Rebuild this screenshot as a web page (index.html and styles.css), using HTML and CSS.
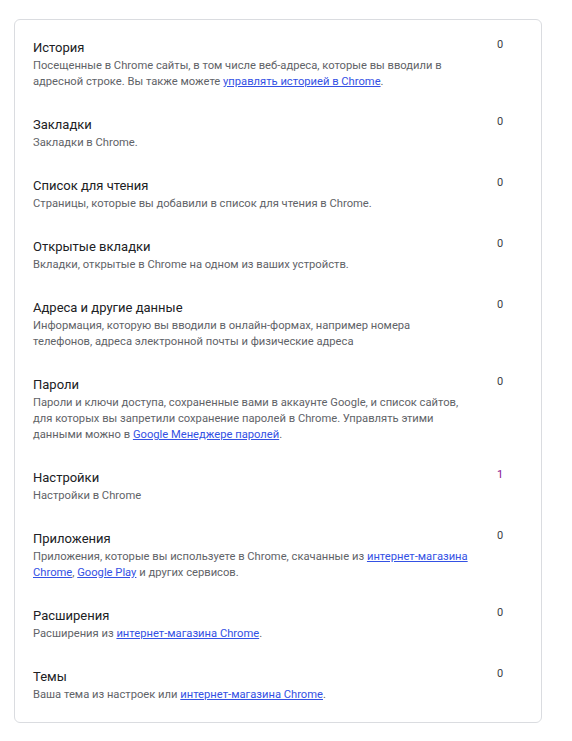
FILE: index.html
```html
<!DOCTYPE html>
<html lang="ru">
<head>
<meta charset="utf-8">
<link rel="stylesheet" href="styles.css">
</head>
<body>
<div class="card">
  <div class="row">
    <div class="info">
      <div class="title">История</div>
      <div class="desc">Посещенные в Chrome сайты, в том числе веб-адреса, которые вы вводили в адресной строке. Вы также можете <a href="#">управлять историей в Chrome</a>.</div>
    </div>
    <div class="count">0</div>
  </div>
  <div class="row">
    <div class="info">
      <div class="title">Закладки</div>
      <div class="desc">Закладки в Chrome.</div>
    </div>
    <div class="count">0</div>
  </div>
  <div class="row">
    <div class="info">
      <div class="title">Список для чтения</div>
      <div class="desc">Страницы, которые вы добавили в список для чтения в Chrome.</div>
    </div>
    <div class="count">0</div>
  </div>
  <div class="row">
    <div class="info">
      <div class="title">Открытые вкладки</div>
      <div class="desc">Вкладки, открытые в Chrome на одном из ваших устройств.</div>
    </div>
    <div class="count">0</div>
  </div>
  <div class="row">
    <div class="info">
      <div class="title">Адреса и другие данные</div>
      <div class="desc">Информация, которую вы вводили в онлайн-формах, например номера телефонов, адреса электронной почты и физические адреса</div>
    </div>
    <div class="count">0</div>
  </div>
  <div class="row">
    <div class="info">
      <div class="title">Пароли</div>
      <div class="desc">Пароли и ключи доступа, сохраненные вами в аккаунте Google, и список сайтов, для которых вы запретили сохранение паролей в Chrome. Управлять этими данными можно в <a href="#">Google Менеджере паролей</a>.</div>
    </div>
    <div class="count">0</div>
  </div>
  <div class="row">
    <div class="info">
      <div class="title">Настройки</div>
      <div class="desc">Настройки в Chrome</div>
    </div>
    <div class="count count-accent">1</div>
  </div>
  <div class="row">
    <div class="info">
      <div class="title">Приложения</div>
      <div class="desc">Приложения, которые вы используете в Chrome, скачанные из <a href="#">интернет-магазина Chrome</a>, <a href="#">Google Play</a> и других сервисов.</div>
    </div>
    <div class="count">0</div>
  </div>
  <div class="row">
    <div class="info">
      <div class="title">Расширения</div>
      <div class="desc">Расширения из <a href="#">интернет-магазина Chrome</a>.</div>
    </div>
    <div class="count">0</div>
  </div>
  <div class="row">
    <div class="info">
      <div class="title">Темы</div>
      <div class="desc">Ваша тема из настроек или <a href="#">интернет-магазина Chrome</a>.</div>
    </div>
    <div class="count">0</div>
  </div>
</div>
</body>
</html>
```

FILE: styles.css
```css
html, body {
  margin: 0;
  padding: 0;
  background: #ffffff;
}
body {
  font-family: Roboto, "Liberation Sans", Arial, sans-serif;
  padding: 19px 30px 0 14px;
}
.card {
  border: 1px solid #dadce0;
  border-radius: 6px;
  padding: 18px 18px 19px 18px;
  display: flex;
  flex-direction: column;
  gap: 25px;
}
.row {
  display: grid;
  grid-template-columns: 438px 1fr;
  column-gap: 26px;
  align-items: start;
}
.title {
  font-size: 13px;
  line-height: 20px;
  color: #202124;
}
.desc {
  font-size: 11.2px;
  line-height: 16px;
  color: #5f6368;
}
.desc a {
  color: #3451e4;
  text-decoration: underline;
}
.count {
  font-size: 11px;
  line-height: 16px;
  color: #3c4043;
  margin-top: -1px;
}
.count-accent {
  color: #881391;
}
```
